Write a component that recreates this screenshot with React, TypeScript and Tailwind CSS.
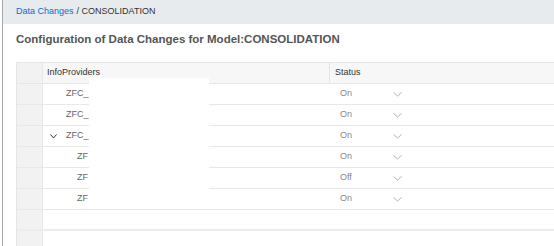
import React from "react";

type Row = { name: string; level: 0 | 1; expanded?: boolean; status: string };

const rows: Row[] = [
  { name: "ZFC_", level: 0, status: "On" },
  { name: "ZFC_", level: 0, status: "On" },
  { name: "ZFC_", level: 0, expanded: true, status: "On" },
  { name: "ZF", level: 1, status: "On" },
  { name: "ZF", level: 1, status: "Off" },
  { name: "ZF", level: 1, status: "On" },
];

function Chevron({ className, w = 11, h = 6 }: { className?: string; w?: number; h?: number }) {
  return (
    <svg width={w} height={h} viewBox={`0 0 ${w} ${h}`} className={className} fill="none">
      <path d={`M0.5 0.5 L${w / 2} ${h - 1} L${w - 0.5} 0.5`} stroke="currentColor" strokeWidth="1" />
    </svg>
  );
}

export default function App() {
  return (
    <div
      className="relative flex h-[246px] w-[554px] overflow-hidden bg-white"
      style={{ fontFamily: '"Liberation Sans", Arial, sans-serif' }}
    >
      <div className="w-[2px] shrink-0" />
      <div className="w-px shrink-0 bg-[#a8a8a8]" />
      <div className="min-w-0 flex-1">
        <div className="flex h-[24px] items-center bg-[#e7ebee] pl-[13px] text-[9px] text-[#333]">
          <span className="text-[#0a6ed1]">Data Changes</span>
          <span className="ml-[3px]">/ CONSOLIDATION</span>
        </div>
        <div className="pl-[13px] pt-[7px] text-[11.5px] leading-[16px] font-bold text-[#555]">
          Configuration of Data Changes for Model:CONSOLIDATION
        </div>

        <div className="ml-[13px] mt-[15px] flex flex-col border-l border-t border-[#e5e5e5] text-[9px]">
          <div className="flex h-[21px] shrink-0 border-b border-[#e5e5e5] bg-[#f7f7f7]">
            <div className="w-[26px] shrink-0 border-r border-[#e8e8e8] bg-[#f2f2f2]" />
            <div className="flex w-[286px] shrink-0 items-center pl-[4px] text-[#333]">InfoProviders</div>
            <div className="flex flex-1 items-center border-l border-[#e5e5e5] pl-[5px] text-[#333]">Status</div>
          </div>
          {rows.map((r, i) => (
            <div key={i} className="flex h-[21px] shrink-0 border-b border-[#e8e8e8]">
              <div className="w-[26px] shrink-0 border-r border-[#e8e8e8] bg-[#f2f2f2]" />
              <div className="flex w-[286px] shrink-0 items-center text-[#666]">
                {r.expanded ? (
                  <Chevron w={7} h={5} className="ml-[7px] mr-[9px] text-[#333]" />
                ) : null}
                <span className={r.expanded ? "" : r.level === 0 ? "pl-[23px]" : "pl-[34px]"}>{r.name}</span>
              </div>
              <div className="flex flex-1 items-center pl-[11px] text-[#888]">
                <span className="w-[53px]">{r.status}</span>
                <Chevron w={9} h={5} className="text-[#aab5c2]" />
              </div>
            </div>
          ))}
          <div className="flex h-[21px] shrink-0 border-b-2 border-[#ececec]">
            <div className="w-[26px] shrink-0 border-r border-[#e8e8e8] bg-[#f2f2f2]" />
            <div className="flex-1" />
          </div>
          <div className="flex h-[30px] shrink-0">
            <div className="w-[26px] shrink-0 border-r border-[#e8e8e8] bg-[#f2f2f2]" />
            <div className="flex-1" />
          </div>
        </div>
      </div>
      <div className="absolute left-[89px] top-[78px] h-[129px] w-[120px] bg-white" />
    </div>
  );
}
